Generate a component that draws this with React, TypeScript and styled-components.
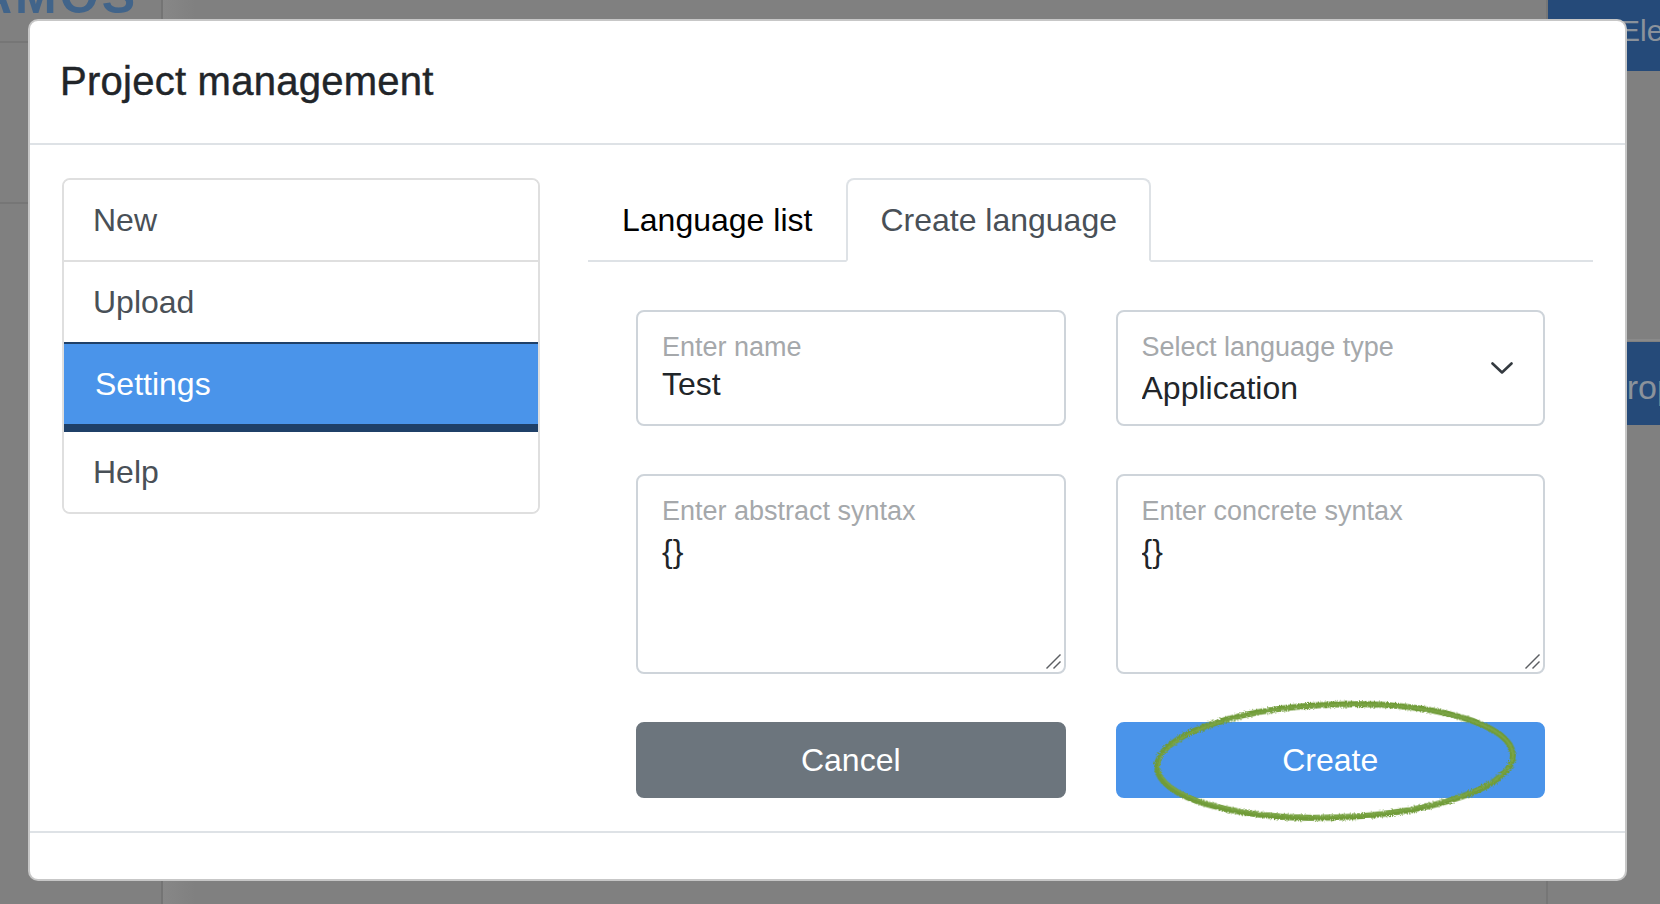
import React from "react";
import styled, { createGlobalStyle } from "styled-components";

const GlobalStyle = createGlobalStyle`
  html, body { margin: 0; padding: 0; }
  body {
    width: 1660px;
    height: 904px;
    overflow: hidden;
    background: #808080;
    font-family: "Liberation Sans", Arial, Helvetica, sans-serif;
  }
  *, *::before, *::after { box-sizing: border-box; }
`;

const FONT = `"Liberation Sans", Arial, Helvetica, sans-serif`;

const Page = styled.div`
  position: relative;
  width: 1660px;
  height: 904px;
  overflow: hidden;
  background: #808080;
`;

/* ---------- dimmed application behind the modal ---------- */

const BgApp = styled.div`
  display: grid;
  grid-template-columns: 163px 1fr 114px;
  height: 904px;
`;

const Sidebar = styled.aside`
  display: flex;
  flex-direction: column;
  background: #808080;
  border-right: 2px solid #747474;
`;

const LogoBar = styled.div`
  height: 43px;
  overflow: hidden;
  border-bottom: 2px solid #767676;
`;

const Logo = styled.div`
  font-family: ${FONT};
  font-weight: 700;
  font-size: 50px;
  line-height: 50px;
  letter-spacing: 3px;
  color: #41648a;
  margin: -29px 0 0 -24px;
  white-space: nowrap;
`;

const SidebarSection = styled.div`
  height: 161px;
  border-bottom: 2px solid #767676;
`;

const Workspace = styled.main`
  background: linear-gradient(90deg, #878787 0, #808080 32px);
`;

const RightPanel = styled.section`
  display: flex;
  flex-direction: column;
  border-left: 2px solid #767676;
  overflow: hidden;
`;

const PanelHeader = styled.div<{ $height: number; $size: number; $padTop: number; $padLeft: number }>`
  height: ${(p) => p.$height}px;
  padding: ${(p) => p.$padTop}px 0 0 ${(p) => p.$padLeft}px;
  background: #254a79;
  color: #8b929b;
  font-family: ${FONT};
  font-size: ${(p) => p.$size}px;
  line-height: ${(p) => p.$size + 6}px;
  white-space: nowrap;
`;

const PanelGap = styled.div`
  height: 270px;
  border-bottom: 2px solid #8a8a8a;
  margin-bottom: 1px;
`;

/* ---------- modal ---------- */

const ModalLayer = styled.div`
  position: absolute;
  inset: 0;
  padding: 19px 0 0 28px;
`;

const Modal = styled.div`
  width: 1599px;
  display: flex;
  flex-direction: column;
  background: #fff;
  border: 2px solid rgba(0, 0, 0, 0.22);
  border-radius: 10px;
  font-family: ${FONT};
`;

const ModalHeader = styled.header`
  padding: 30px 30px 32px;
  border-bottom: 2px solid #dee2e6;
`;

const Title = styled.h5`
  margin: 0;
  font-size: 40px;
  line-height: 60px;
  font-weight: 400;
  letter-spacing: 0.25px;
  color: #212529;
  -webkit-text-stroke: 0.45px #212529;
`;

const ModalBody = styled.div`
  height: 686px;
  padding: 33px 32px 32px 32px;
  display: grid;
  grid-template-columns: 478px 1fr;
  column-gap: 48px;
  align-items: start;
`;

const ModalFooter = styled.footer`
  height: 48px;
  border-top: 2px solid #dee2e6;
`;

/* ---------- left menu ---------- */

const Menu = styled.nav`
  display: flex;
  flex-direction: column;
  border: 2px solid #dfdfdf;
  border-radius: 8px;
  overflow: hidden;
`;

const MenuItem = styled.div<{ $active?: boolean; $noTop?: boolean }>`
  padding: 16px 29px;
  font-size: 32px;
  line-height: 48px;
  color: ${(p) => (p.$active ? "#fff" : "#495057")};
  background: ${(p) => (p.$active ? "#4a94ea" : "#fff")};
  border-top: ${(p) => (p.$noTop ? "0" : "2px solid #dfdfdf")};
  ${(p) =>
    p.$active &&
    `
    border: 2px solid #1f4068;
    border-bottom-width: 8px;
    margin: 0 -2px;
    padding-left: 31px;
  `}
  &:first-child {
    border-top: 0;
  }
`;

/* ---------- tabs ---------- */

const Content = styled.div`
  display: flex;
  flex-direction: column;
`;

const TabBar = styled.div`
  display: flex;
  border-bottom: 2px solid #dee2e6;
`;

const Tab = styled.button<{ $active?: boolean }>`
  margin: 0 0 -2px;
  padding: 16px 32px;
  font-family: ${FONT};
  font-size: 32px;
  line-height: 48px;
  background: ${(p) => (p.$active ? "#fff" : "transparent")};
  color: ${(p) => (p.$active ? "#495057" : "#000")};
  border: 2px solid transparent;
  border-color: ${(p) => (p.$active ? "#dee2e6 #dee2e6 #fff" : "transparent")};
  border-radius: 8px 8px 0 0;
  cursor: pointer;
`;

/* ---------- form ---------- */

const Form = styled.form`
  display: grid;
  grid-template-columns: 1fr 1fr;
  column-gap: 50px;
  row-gap: 48px;
  padding: 48px 48px 0 48px;
`;

const FieldBox = styled.label<{ $height: number }>`
  position: relative;
  height: ${(p) => p.$height}px;
  display: flex;
  border: 2px solid #ced4da;
  border-radius: 8px;
  background: #fff;
  overflow: hidden;
`;

const FieldStack = styled.div<{ $padRight: number }>`
  flex: 1;
  min-width: 0;
  display: flex;
  flex-direction: column;
  padding: 19px ${(p) => p.$padRight}px 0 24px;
`;

const FloatLabel = styled.span`
  font-size: 27px;
  line-height: 32px;
  color: #a5a8ab;
  white-space: nowrap;
`;

const TextInput = styled.input`
  margin-top: 1px;
  padding: 0;
  border: 0;
  outline: none;
  height: 40px;
  font-family: ${FONT};
  font-size: 32px;
  line-height: 40px;
  color: #212529;
  background: transparent;
`;

const Select = styled.select`
  margin-top: 5px;
  padding: 0;
  border: 0;
  outline: none;
  height: 40px;
  font-family: ${FONT};
  font-size: 32px;
  line-height: 40px;
  color: #212529;
  background: transparent;
  appearance: none;
  -webkit-appearance: none;
`;

const Chevron = styled.svg`
  align-self: center;
  flex: none;
  margin-right: 30px;
`;

const TextArea = styled.textarea`
  flex: 1;
  margin-top: 4px;
  padding: 0 24px 0 0;
  border: 0;
  outline: none;
  resize: none;
  font-family: ${FONT};
  font-size: 32px;
  line-height: 40px;
  color: #212529;
  background: transparent;
`;

const Grip = styled.svg`
  position: absolute;
  right: 2px;
  bottom: 2px;
  pointer-events: none;
`;

const ButtonWrap = styled.div`
  position: relative;
`;

const Button = styled.button<{ $variant: "secondary" | "primary" }>`
  width: 100%;
  height: 76px;
  padding: 12px 24px;
  font-family: ${FONT};
  font-size: 32px;
  line-height: 48px;
  color: #fff;
  border-radius: 8px;
  cursor: pointer;
  background: ${(p) => (p.$variant === "primary" ? "#4a94ea" : "#6c757d")};
  border: 2px solid ${(p) => (p.$variant === "primary" ? "#4a94ea" : "#6c757d")};
`;

const Annotation = styled.svg`
  position: absolute;
  left: 30px;
  top: -28px;
  pointer-events: none;
  overflow: visible;
`;

const menuItems = ["New", "Upload", "Settings", "Help"];
const ACTIVE = "Settings";

function ResizeGrip() {
  return (
    <Grip width="18" height="18" viewBox="0 0 18 18">
      <line x1="16.5" y1="2.5" x2="2.5" y2="16.5" stroke="#5c5f63" strokeWidth="1.4" />
      <line x1="16.5" y1="9.5" x2="9.5" y2="16.5" stroke="#5c5f63" strokeWidth="1.4" />
    </Grip>
  );
}

export default function App() {
  return (
    <>
      <GlobalStyle />
      <Page>
        <BgApp>
          <Sidebar>
            <LogoBar>
              <Logo>AMOS</Logo>
            </LogoBar>
            <SidebarSection />
          </Sidebar>
          <Workspace />
          <RightPanel>
            <PanelHeader $height={71} $size={30} $padTop={13} $padLeft={72}>
              Elements
            </PanelHeader>
            <PanelGap />
            <PanelHeader $height={83} $size={34} $padTop={25} $padLeft={56}>
              Properties
            </PanelHeader>
          </RightPanel>
        </BgApp>

        <ModalLayer>
          <Modal role="dialog">
            <ModalHeader>
              <Title>Project management</Title>
            </ModalHeader>
            <ModalBody>
              <Menu>
                {menuItems.map((item, i) => (
                  <MenuItem
                    key={item}
                    $active={item === ACTIVE}
                    $noTop={i > 0 && menuItems[i - 1] === ACTIVE}
                  >
                    {item}
                  </MenuItem>
                ))}
              </Menu>
              <Content>
                <TabBar role="tablist">
                  <Tab type="button">Language list</Tab>
                  <Tab type="button" $active>
                    Create language
                  </Tab>
                </TabBar>
                <Form onSubmit={(e) => e.preventDefault()}>
                  <FieldBox $height={116}>
                    <FieldStack $padRight={24}>
                      <FloatLabel>Enter name</FloatLabel>
                      <TextInput defaultValue="Test" />
                    </FieldStack>
                  </FieldBox>
                  <FieldBox $height={116}>
                    <FieldStack $padRight={12}>
                      <FloatLabel>Select language type</FloatLabel>
                      <Select defaultValue="application">
                        <option value="application">Application</option>
                        <option value="library">Library</option>
                      </Select>
                    </FieldStack>
                    <Chevron width="22" height="12" viewBox="0 0 22 12">
                      <polyline
                        points="1.5,1.5 11,10.5 20.5,1.5"
                        fill="none"
                        stroke="#343a40"
                        strokeWidth="2.6"
                        strokeLinecap="round"
                        strokeLinejoin="round"
                      />
                    </Chevron>
                  </FieldBox>
                  <FieldBox $height={200}>
                    <FieldStack $padRight={0}>
                      <FloatLabel>Enter abstract syntax</FloatLabel>
                      <TextArea defaultValue="{}" />
                    </FieldStack>
                    <ResizeGrip />
                  </FieldBox>
                  <FieldBox $height={200}>
                    <FieldStack $padRight={0}>
                      <FloatLabel>Enter concrete syntax</FloatLabel>
                      <TextArea defaultValue="{}" />
                    </FieldStack>
                    <ResizeGrip />
                  </FieldBox>
                  <ButtonWrap>
                    <Button type="button" $variant="secondary">
                      Cancel
                    </Button>
                  </ButtonWrap>
                  <ButtonWrap>
                    <Button type="submit" $variant="primary">
                      Create
                    </Button>
                    <Annotation width="378" height="134" viewBox="0 0 378 134">
                      <defs>
                        <filter id="chalk" x="-10%" y="-20%" width="120%" height="140%">
                          <feTurbulence type="fractalNoise" baseFrequency="0.9" numOctaves="2" seed="3" result="noise" />
                          <feDisplacementMap in="SourceGraphic" in2="noise" scale="4" />
                        </filter>
                      </defs>
                      <g transform="rotate(-2 189 67)" filter="url(#chalk)">
                        <ellipse cx="189" cy="67" rx="178" ry="56.5" fill="none" stroke="#6f9b39" strokeWidth="6" />
                        <ellipse cx="190" cy="66.5" rx="177" ry="55.5" fill="none" stroke="#82aa4c" strokeWidth="2" opacity="0.6" />
                      </g>
                    </Annotation>
                  </ButtonWrap>
                </Form>
              </Content>
            </ModalBody>
            <ModalFooter />
          </Modal>
        </ModalLayer>
      </Page>
    </>
  );
}
